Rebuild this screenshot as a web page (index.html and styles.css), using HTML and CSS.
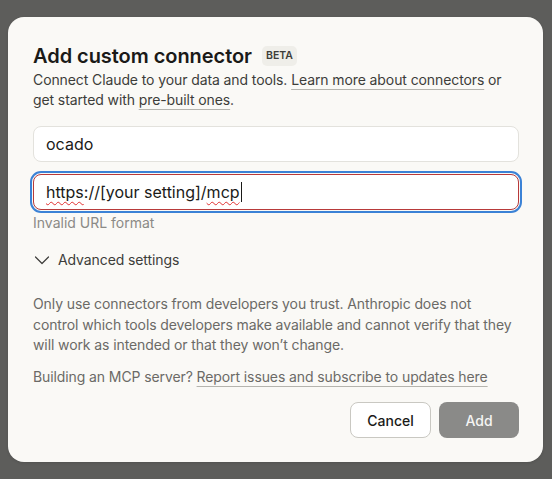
FILE: index.html
```html
<!DOCTYPE html>
<html>
<head>
<meta charset="utf-8">
<link rel="stylesheet" href="styles.css">
</head>
<body>
<div class="modal">
  <div class="title-row">
    <h1 class="title">Add custom connector</h1>
    <span class="badge">BETA</span>
  </div>
  <p class="subtitle">Connect Claude to your data and tools. <a class="link">Learn more about connectors</a> or get started with <a class="link">pre-built ones</a>.</p>
  <div class="field field-name">ocado</div>
  <div class="field field-url"><span class="misspelled">https</span>://[your setting]/<span class="misspelled">mcp</span><span class="caret"></span></div>
  <div class="error">Invalid URL format</div>
  <div class="advanced">
    <svg class="chev" width="16" height="16" viewBox="0 0 16 16"><path d="M1.5 5 L8 11.5 L14.5 5" fill="none" stroke="#3d3d3a" stroke-width="1.2" stroke-linecap="round" stroke-linejoin="round"/></svg>
    <span>Advanced settings</span>
  </div>
  <p class="note">Only use connectors from developers you trust. Anthropic does not control which tools developers make available and cannot verify that they will work as intended or that they won’t change.</p>
  <p class="note note-build">Building an MCP server? <a class="link">Report issues and subscribe to updates here</a></p>
  <div class="actions">
    <button class="btn btn-cancel">Cancel</button>
    <button class="btn btn-add">Add</button>
  </div>
</div>
</body>
</html>
```

FILE: styles.css
```css
html, body {
  margin: 0;
  padding: 0;
}
body {
  background: #5d5d5b;
  font-family: Inter, "Noto Sans", sans-serif;
  width: 552px;
  height: 479px;
  overflow: hidden;
}
.modal {
  box-sizing: border-box;
  margin: 17px 0 0 8px;
  width: 535px;
  height: 445px;
  background: #faf9f6;
  border-radius: 16px;
  padding: 25px 24px 24px 25px;
  display: flex;
  flex-direction: column;
  box-shadow: 0 1px 3px rgba(0, 0, 0, 0.12);
}
.title-row {
  display: flex;
  align-items: center;
  gap: 10px;
  height: 28px;
}
.title {
  margin: 0;
  font-size: 20px;
  font-weight: 600;
  color: #1a1a18;
  letter-spacing: -0.05px;
  line-height: 28px;
}
.badge {
  background: #efeee9;
  color: #3d3d3a;
  font-size: 10.5px;
  font-weight: 600;
  padding: 3px 4px;
  border-radius: 5px;
  line-height: 14px;
}
.subtitle {
  margin: 0;
  font-size: 14px;
  letter-spacing: -0.1px;
  line-height: 20px;
  color: #3d3d3a;
}
.link {
  color: inherit;
  text-decoration: underline;
  text-decoration-color: #b5b4ae;
  text-underline-offset: 4px;
  text-decoration-thickness: 1px;
}
.field {
  box-sizing: border-box;
  height: 36px;
  border-radius: 8px;
  background: #ffffff;
  border: 1px solid #e3e2dd;
  padding: 0 12px;
  font-size: 16px;
  line-height: 34px;
  color: #1a1a18;
  display: flex;
  align-items: center;
}
.field-name {
  margin-top: 16px;
}
.field-url {
  margin-top: 12px;
  border-color: #b83a3a;
  outline: 2px solid #3b82d6;
  outline-offset: 1px;
}
.misspelled {
  text-decoration: underline wavy #e03030;
  text-decoration-thickness: 1px;
  text-underline-offset: 3px;
}
.caret {
  display: inline-block;
  width: 1px;
  height: 20px;
  background: #1a1a18;
  margin-left: 1px;
}
.error {
  margin-top: 3px;
  font-size: 14px;
  line-height: 20px;
  color: #8b8a86;
}
.advanced {
  margin-top: 17px;
  display: flex;
  align-items: center;
  gap: 8px;
  font-size: 14px;
  letter-spacing: -0.1px;
  line-height: 20px;
  color: #3d3d3a;
  padding-left: 1px;
}
.chev {
  display: block;
}
.note {
  margin: 24px 0 0 0;
  font-size: 14px;
  letter-spacing: -0.1px;
  line-height: 20.5px;
  color: #6b6a66;
}
.note-build {
  margin-top: 11px;
}
.actions {
  margin-top: auto;
  display: flex;
  justify-content: flex-end;
  gap: 8px;
}
.btn {
  box-sizing: border-box;
  height: 36px;
  border-radius: 8px;
  font-family: Inter, "Noto Sans", sans-serif;
  font-size: 14px;
  font-weight: 500;
  cursor: pointer;
}
.btn-cancel {
  width: 81px;
  background: #ffffff;
  border: 1px solid #c9c8c2;
  color: #1a1a18;
}
.btn-add {
  width: 80px;
  background: #8a8a88;
  border: none;
  color: #f5f5f3;
}
```
